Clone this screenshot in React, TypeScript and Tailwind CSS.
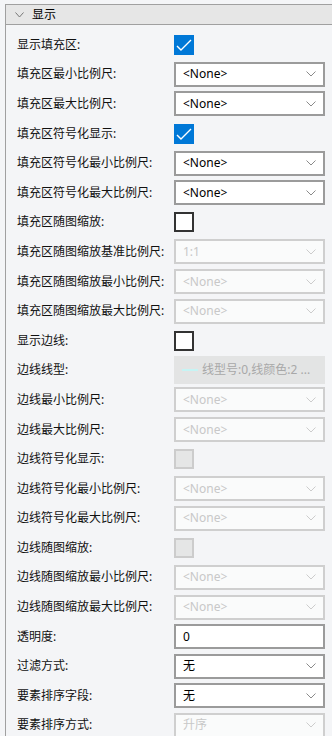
type Row =
  | { label: string; kind: "check"; checked: boolean; disabled?: boolean }
  | { label: string; kind: "select"; value: string; disabled?: boolean }
  | { label: string; kind: "input"; value: string }
  | { label: string; kind: "line"; value: string };

const rows: Row[] = [
  { label: "显示填充区:", kind: "check", checked: true },
  { label: "填充区最小比例尺:", kind: "select", value: "<None>" },
  { label: "填充区最大比例尺:", kind: "select", value: "<None>" },
  { label: "填充区符号化显示:", kind: "check", checked: true },
  { label: "填充区符号化最小比例尺:", kind: "select", value: "<None>" },
  { label: "填充区符号化最大比例尺:", kind: "select", value: "<None>" },
  { label: "填充区随图缩放:", kind: "check", checked: false },
  { label: "填充区随图缩放基准比例尺:", kind: "select", value: "1:1", disabled: true },
  { label: "填充区随图缩放最小比例尺:", kind: "select", value: "<None>", disabled: true },
  { label: "填充区随图缩放最大比例尺:", kind: "select", value: "<None>", disabled: true },
  { label: "显示边线:", kind: "check", checked: false },
  { label: "边线线型:", kind: "line", value: "线型号:0,线颜色:2 ..." },
  { label: "边线最小比例尺:", kind: "select", value: "<None>", disabled: true },
  { label: "边线最大比例尺:", kind: "select", value: "<None>", disabled: true },
  { label: "边线符号化显示:", kind: "check", checked: false, disabled: true },
  { label: "边线符号化最小比例尺:", kind: "select", value: "<None>", disabled: true },
  { label: "边线符号化最大比例尺:", kind: "select", value: "<None>", disabled: true },
  { label: "边线随图缩放:", kind: "check", checked: false, disabled: true },
  { label: "边线随图缩放最小比例尺:", kind: "select", value: "<None>", disabled: true },
  { label: "边线随图缩放最大比例尺:", kind: "select", value: "<None>", disabled: true },
  { label: "透明度:", kind: "input", value: "0" },
  { label: "过滤方式:", kind: "select", value: "无" },
  { label: "要素排序字段:", kind: "select", value: "无" },
  { label: "要素排序方式:", kind: "select", value: "升序", disabled: true },
];

function Chevron({ color }: { color: string }) {
  return (
    <svg width="10" height="6" viewBox="0 0 10 6" fill="none">
      <path d="M0.5 0.5 L5 5 L9.5 0.5" stroke={color} strokeWidth="1" />
    </svg>
  );
}

function Control({ row }: { row: Row }) {
  if (row.kind === "check") {
    if (row.checked) {
      return (
        <div className="w-[20px] h-[20px] bg-[#0078d7]">
          <svg width="20" height="20" viewBox="0 0 20 20" fill="none">
            <path d="M3 11 L7 15 L17 5" stroke="#ffffff" strokeWidth="1.4" />
          </svg>
        </div>
      );
    }
    return row.disabled ? (
      <div className="w-[20px] h-[20px] border-2 border-[#cccccc] bg-[#e5e6e6]" />
    ) : (
      <div className="w-[20px] h-[20px] border-2 border-[#333333] bg-white" />
    );
  }
  if (row.kind === "line") {
    return (
      <div className="h-[28px] bg-[#e3e4e4] flex items-center pl-[8px] gap-[4px]">
        <div className="w-[16px] h-[2px] bg-[#c6f4f4]" />
        <span className="text-[12px] text-[#a8a8a8]">{row.value}</span>
      </div>
    );
  }
  if (row.kind === "input") {
    return (
      <div className="h-[25px] border-2 border-[#9b9b9b] bg-white flex items-center pl-[7px] text-[12px] text-black">
        {row.value}
      </div>
    );
  }
  const dis = row.disabled;
  return (
    <div
      className={
        dis
          ? "h-[25px] border-2 border-[#cfcfcf] bg-[#fafbfb] flex items-center justify-between pl-[7px] pr-[7px] text-[12px] text-[#c8c8c8]"
          : "h-[25px] border-2 border-[#9b9b9b] bg-white flex items-center justify-between pl-[7px] pr-[7px] text-[12px] text-black"
      }
    >
      <span>{row.value}</span>
      <Chevron color={dis ? "#cccccc" : "#8a8a8a"} />
    </div>
  );
}

export default function App() {
  return (
    <div
      className="w-[332px] h-[736px] overflow-hidden bg-[#f4f5f7] pt-[4px] pl-[5px]"
      style={{ fontFamily: '"Noto Sans", "Noto Sans CJK SC", sans-serif' }}
    >
      <div className="h-full border-l border-t border-[#a0a0a0]">
        <div className="h-[20px] bg-[#e6e6e6] border-b border-[#a0a0a0] flex items-center pl-[9px] gap-[8px]">
          <svg width="9" height="6" viewBox="0 0 9 6" fill="none">
            <path d="M0.5 0.5 L4.5 5 L8.5 0.5" stroke="#777777" strokeWidth="1" />
          </svg>
          <span className="text-[12px] text-black leading-none">显示</span>
        </div>
        <div className="pt-[5px] pl-[11px]">
          {rows.map((row, i) => (
            <div key={i} className="h-[29.6px] grid grid-cols-[157px_151px] items-center">
              <span className="text-[12px] text-[#111111] whitespace-nowrap">{row.label}</span>
              <Control row={row} />
            </div>
          ))}
        </div>
      </div>
    </div>
  );
}
